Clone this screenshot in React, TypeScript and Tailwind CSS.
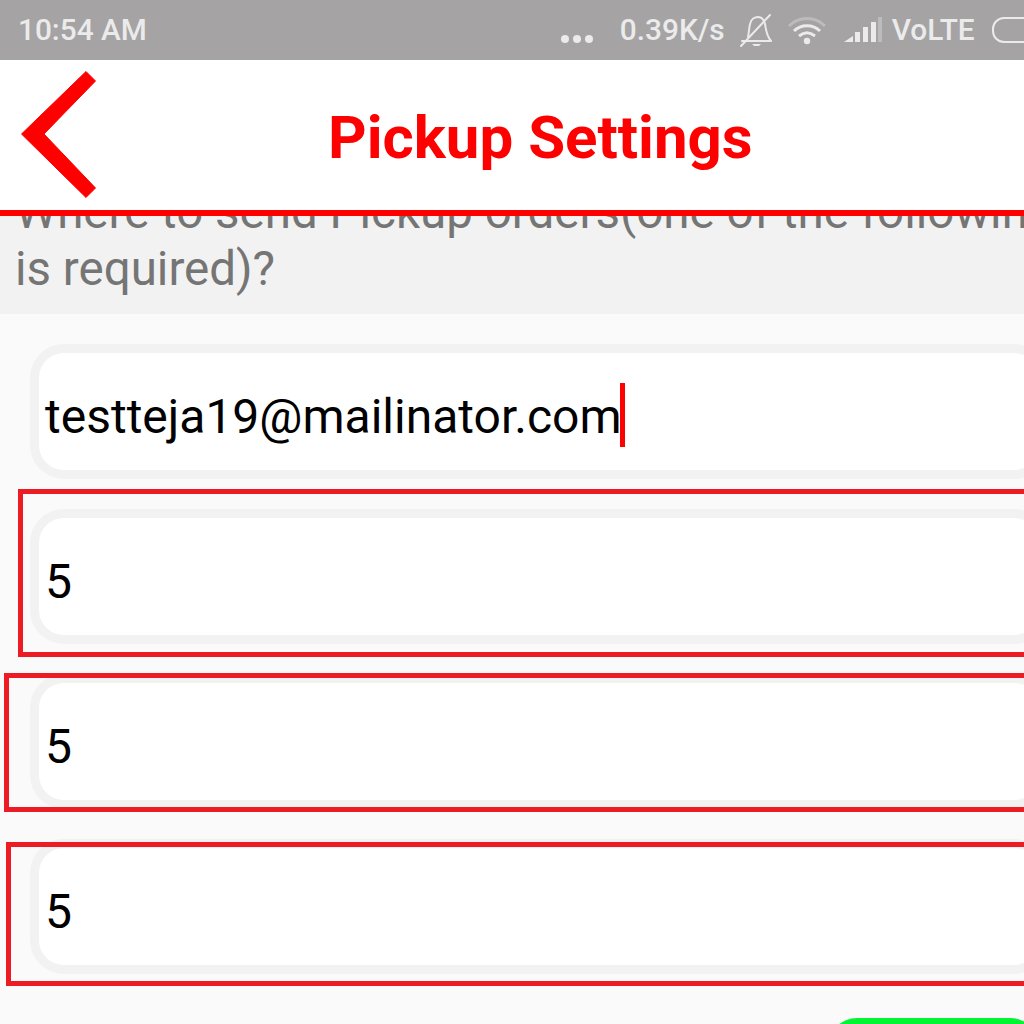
const roboto = "font-['Roboto','Liberation_Sans',sans-serif]"

function BellOff() {
  return (
    <svg width="34" height="34" viewBox="0 0 34 34" fill="none" stroke="#ebebeb" strokeWidth="2" strokeLinecap="round" strokeLinejoin="round" className="ml-[14px] shrink-0">
      <path d="M9 24 C10 20 10 15 11 11 C12 6 16 4 19 4 C23 4 25 7 26 11 C27 16 27 22 32 28 L3 28" />
      <path d="M13 31 L22 31 L20 33 L15 33 Z" fill="#ebebeb" stroke="none" />
      <path d="M2 33 L31 2" />
    </svg>
  )
}

function Wifi() {
  return (
    <svg width="40" height="30" viewBox="0 0 40 30" fill="none" strokeLinecap="butt" className="ml-[14px] shrink-0">
      <path d="M2 11 C12 1 28 1 38 11" stroke="#bdbcbc" strokeWidth="3" />
      <path d="M7 16 C14 9 26 9 33 16" stroke="#ebebeb" strokeWidth="3" />
      <path d="M12 21 C17 17 23 17 28 21" stroke="#ebebeb" strokeWidth="3" />
      <circle cx="20" cy="26" r="3.2" fill="#ebebeb" />
    </svg>
  )
}

function Signal() {
  return (
    <svg width="38" height="26" viewBox="0 0 38 26" className="ml-[17px] shrink-0">
      <path d="M0 25 L9 19 L9 25 Z" fill="#ebebeb" />
      <rect x="11" y="15" width="5" height="10" fill="#ebebeb" />
      <rect x="19" y="10" width="5" height="15" fill="#ebebeb" />
      <rect x="27" y="5" width="5" height="20" fill="#ebebeb" />
      <rect x="34" y="0" width="4" height="25" fill="#bdbcbc" />
    </svg>
  )
}

function Field({ value, caret }: { value: string; caret?: boolean }) {
  return (
    <div className="ml-[30px] h-[135px] w-[1018px] shrink-0 rounded-[34px] border-[9px] border-[#f2f2f2] bg-white pl-[6px] pt-[5px] text-[48px] leading-[117px] text-black">
      <span>{value}</span>
      {caret && <span className="ml-[-2px] inline-block h-[64px] w-[5px] bg-[#ff0000] align-[-14px]" />}
    </div>
  )
}

export default function App() {
  return (
    <div className={`relative h-[1024px] w-[1024px] overflow-hidden bg-[#fafafa] ${roboto}`}>
      <div className="flex h-[60px] items-center bg-[#a5a3a4] pl-[18px] text-[29.8px] font-medium text-[#ebebeb]">
        <span className="shrink-0 whitespace-nowrap">10:54 AM</span>
        <div className="ml-[414px] flex shrink-0 items-center gap-[4px] pt-[18px]">
          <span className="h-[8px] w-[8px] rounded-full bg-[#ebebeb]" />
          <span className="h-[8px] w-[8px] rounded-full bg-[#ebebeb]" />
          <span className="h-[8px] w-[8px] rounded-full bg-[#ebebeb]" />
        </div>
        <span className="ml-[27px] shrink-0">0.39K/s</span>
        <BellOff />
        <Wifi />
        <Signal />
        <span className="ml-[10px] shrink-0">VoLTE</span>
        <div className="ml-[17px] h-[26px] w-[60px] shrink-0 rounded-[12px] border-2 border-[#ebebeb]" />
      </div>

      <div className="flex h-[150px] items-center bg-white">
        <svg width="76" height="130" viewBox="0 0 76 130" className="ml-[21px] shrink-0">
          <path d="M65 1.5 L74.5 11 L23 64 L74.5 118 L65 127.5 L0.5 64 Z" fill="#ff0000" stroke="#ff0000" strokeWidth="1" strokeLinejoin="round" />
        </svg>
        <h1 className="ml-[231px] mt-[6px] whitespace-nowrap text-[60px] font-bold leading-none text-[#ff0000]">Pickup Settings</h1>
      </div>
      <div className="h-[6px] bg-[#ff0000]" />

      <div className="h-[98px] overflow-hidden bg-[#f2f2f2] pl-[15px] text-[47.5px] leading-[57px] text-[#757575]">
        <div className="mt-[-32px] whitespace-nowrap">Where to send Pickup orders(one of the following</div>
        <div className="whitespace-nowrap">is required)?</div>
      </div>

      <div className="flex flex-col gap-[30px] pt-[30px]">
        <Field value="testteja19@mailinator.com" caret />
        <Field value="5" />
        <Field value="5" />
        <Field value="5" />
      </div>

      <div className="ml-[828px] mt-[44px] h-[90px] w-[211px] rounded-[29px] bg-[#00f532]" />

      {/* annotation boxes drawn over the screenshot */}
      <div className="absolute left-[18px] top-[489px] h-[168px] w-[1040px] border-[5px] border-[#ed1c24]" />
      <div className="absolute left-[4px] top-[673px] h-[139px] w-[1040px] border-[5px] border-[#ed1c24]" />
      <div className="absolute left-[6px] top-[842px] h-[144px] w-[1040px] border-[5px] border-[#ed1c24]" />
    </div>
  )
}
